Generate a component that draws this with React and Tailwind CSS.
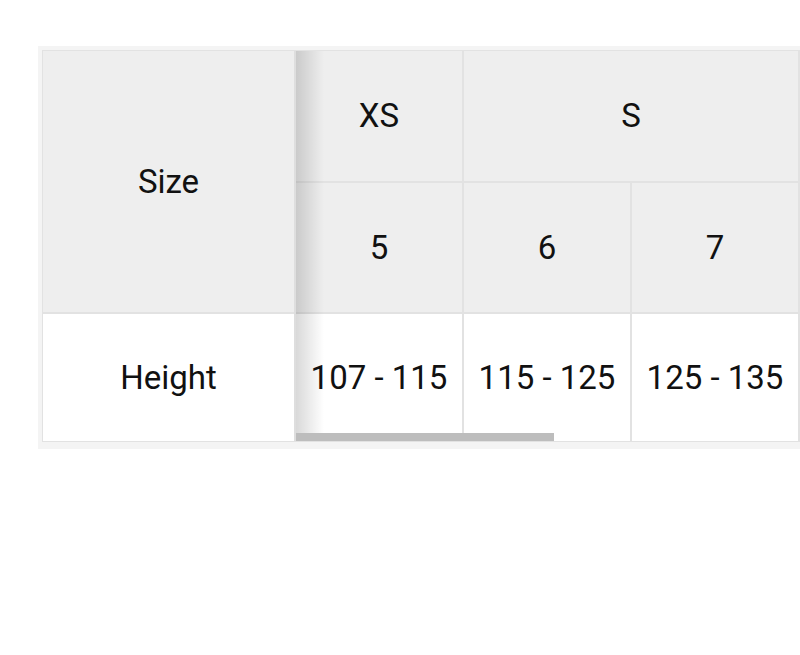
import React from 'react';

const cols = [
  { label: '5', range: '107 - 115' },
  { label: '6', range: '115 - 125' },
  { label: '7', range: '125 - 135' },
];

const App = () => {
  return (
    <div className="w-[800px] h-[655px] bg-white overflow-hidden pt-[46px] pl-[38px] font-['Roboto',sans-serif] text-[33px] text-[#111111]">
      <div className="w-[800px] border-[4px] border-b-[7px] border-[#f4f4f4]">
        <div className="flex border border-[#e2e2e2]">
          {/* Fixed column */}
          <div className="w-[253px] shrink-0 flex flex-col border-r-2 border-[#dedede]">
            <div className="h-[263px] bg-[#eeeeee] flex items-center justify-center border-b-2 border-[#e2e2e2]">
              Size
            </div>
            <div className="h-[127px] bg-white flex items-center justify-center">Height</div>
          </div>

          {/* Scrolling part */}
          <div className="relative flex flex-col">
            <div className="flex h-[132px] bg-[#eeeeee] border-b-2 border-[#e2e2e2]">
              <div className="w-[168px] flex items-center justify-center border-r-2 border-[#e2e2e2]">XS</div>
              <div className="w-[336px] flex items-center justify-center border-r-2 border-[#e2e2e2]">S</div>
            </div>
            <div className="flex h-[131px] bg-[#eeeeee] border-b-2 border-[#e2e2e2]">
              {cols.map((c) => (
                <div key={c.label} className="w-[168px] flex items-center justify-center border-r-2 border-[#e2e2e2]">
                  {c.label}
                </div>
              ))}
            </div>
            <div className="flex h-[127px] bg-white">
              {cols.map((c) => (
                <div key={c.label} className="w-[168px] flex items-center justify-center border-r-2 border-[#e2e2e2] whitespace-nowrap">
                  {c.range}
                </div>
              ))}
            </div>

            {/* left edge shadow */}
            <div className="absolute left-0 top-0 bottom-0 w-[28px] bg-gradient-to-r from-black/15 to-transparent pointer-events-none"></div>
            {/* scrollbar thumb */}
            <div className="absolute left-0 bottom-0 w-[258px] h-[8px] bg-[#bdbdbd]"></div>
          </div>
        </div>
      </div>
    </div>
  );
};

export default App;
